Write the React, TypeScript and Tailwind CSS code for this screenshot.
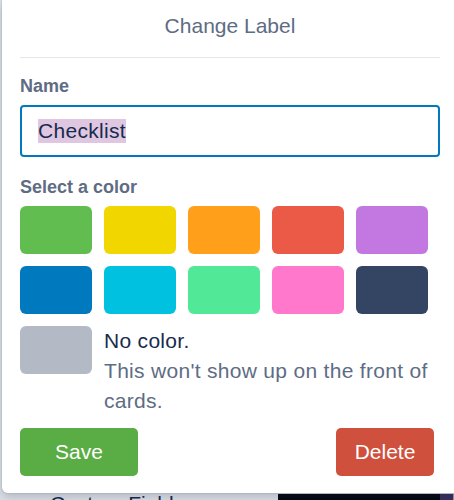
import React from 'react';

const swatches = [
  '#61bd4f',
  '#f2d600',
  '#ff9f1a',
  '#eb5a46',
  '#c377e0',
  '#0079bf',
  '#00c2e0',
  '#51e898',
  '#ff78cb',
  '#344563',
];

export default function App() {
  return (
    <div
      className="relative h-[500px] w-[454px] overflow-hidden bg-[#dcdfe4]"
      style={{ fontFamily: '"Liberation Sans", Arial, sans-serif' }}
    >
      {/* Page behind the popover */}
      <div className="flex h-full flex-col justify-end">
        <div className="flex h-[6px] items-start">
          <div className="w-[278px] overflow-hidden pl-[50px]">
            <div className="-mt-[2px] text-[21px] leading-[24px] text-[#172b4d]">Custom Fields</div>
          </div>
          <div className="h-full w-[162px] bg-[#050813]" />
          <div className="h-full w-[13px] bg-[#3b2f5c]" />
          <div className="h-full w-[1px] bg-[#9aa0ad]" />
        </div>
      </div>

      {/* Change label popover */}
      <div className="absolute left-[2px] top-0 h-[493px] w-[470px] rounded-b-[6px] bg-white px-[18px] pb-[17px] shadow-[0_4px_10px_rgba(9,30,66,0.2),0_0_0_1px_rgba(9,30,66,0.06)]">
        <div className="w-[420px]">
          <div className="h-[58px] border-b border-[#e4e6ea] pt-[11px] text-center text-[21px] leading-[30px] text-[#5e6c84]">
            Change Label
          </div>

          <div className="mt-[16px] text-[18px] font-bold leading-[24px] text-[#5e6c84]">Name</div>
          <div className="mt-[7px] flex h-[52px] items-center rounded-[4px] border-2 border-[#0079bf] px-[16px]">
            <span className="bg-[#dfc7e2] text-[21px] leading-[24px] tracking-[0.3px] text-[#172b4d]">Checklist</span>
          </div>

          <div className="mt-[18px] text-[18px] font-bold leading-[24px] text-[#5e6c84]">Select a color</div>
          <div className="mt-[7px] grid grid-cols-[repeat(5,72px)] gap-[12px]">
            {swatches.map((c) => (
              <div key={c} className="h-[48px] w-[72px] rounded-[6px]" style={{ backgroundColor: c }} />
            ))}
          </div>

          <div className="mt-[12px] flex gap-[12px]">
            <div className="h-[48px] w-[72px] shrink-0 rounded-[6px] bg-[#b3bac5]" />
            <div className="text-[21px] leading-[30px] tracking-[0.3px]">
              <div className="text-[#172b4d]">No color.</div>
              <div className="text-[#5e6c84]">This won't show up on the front of cards.</div>
            </div>
          </div>

          <div className="mt-[12px] flex items-center justify-between pr-[6px]">
            <button className="h-[48px] w-[118px] rounded-[5px] bg-[#5aac44] text-[21px] text-white">Save</button>
            <button className="h-[48px] w-[98px] rounded-[5px] bg-[#cf513d] text-[21px] text-white">Delete</button>
          </div>
        </div>
      </div>
    </div>
  );
}
